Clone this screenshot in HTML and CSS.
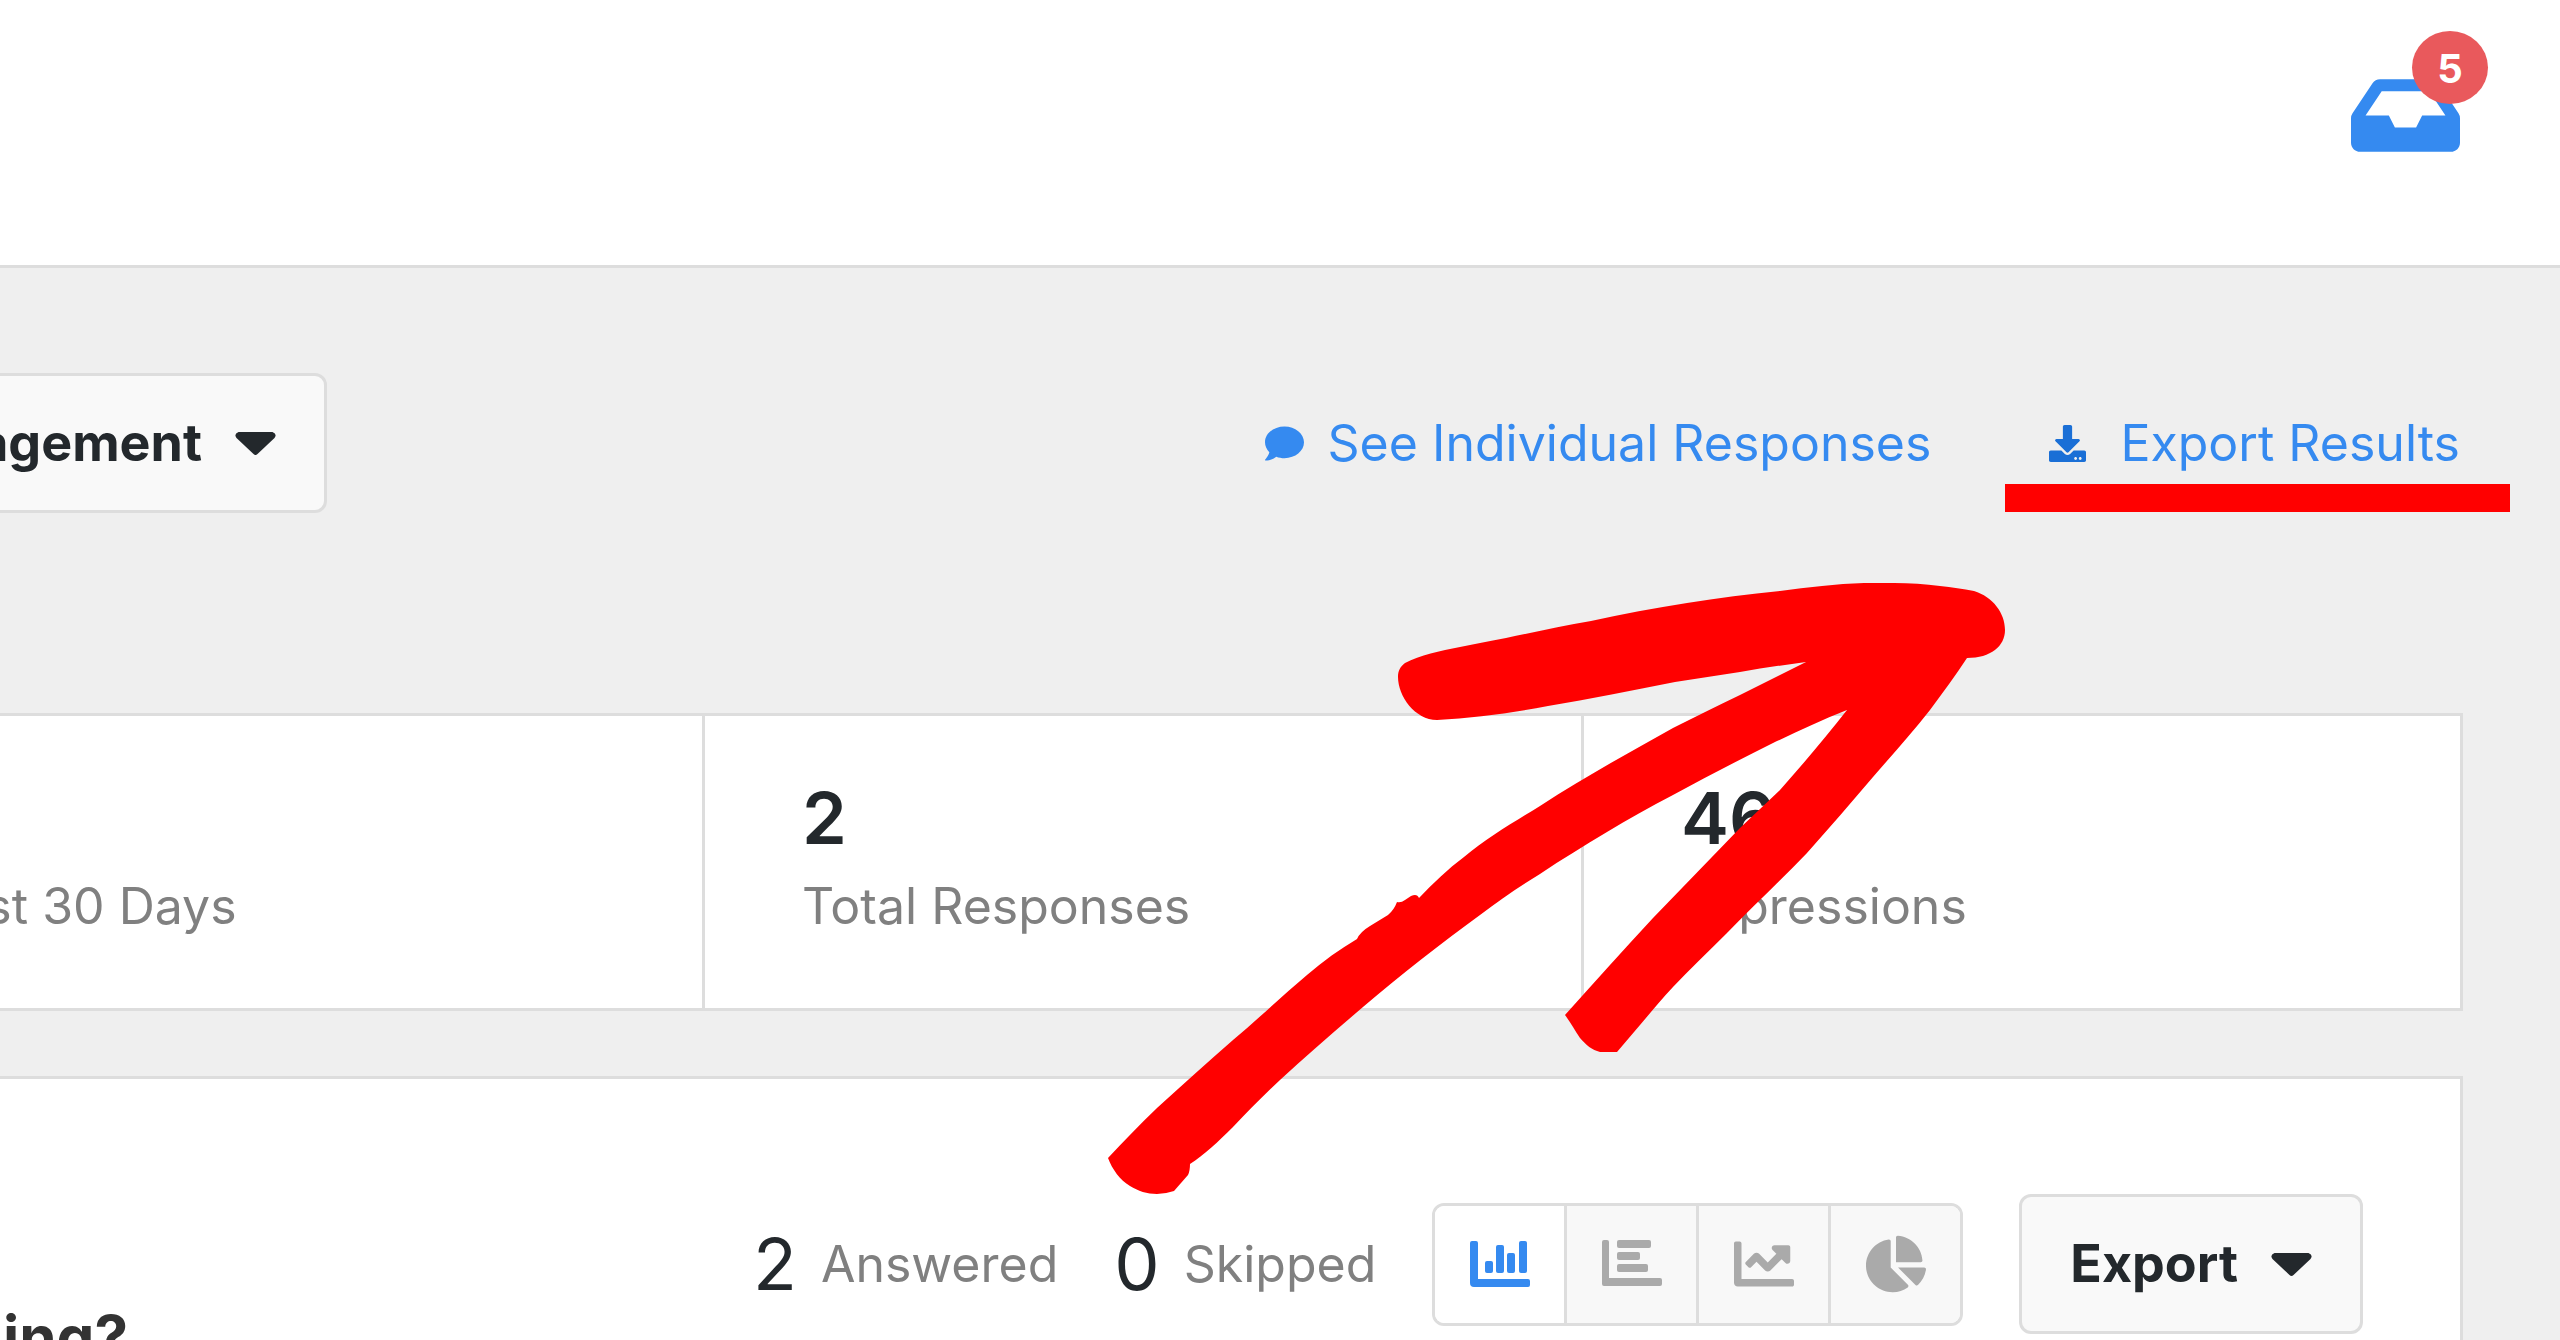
FILE: index.html
```html
<!DOCTYPE html>
<html lang="en">
<head>
    <meta charset="UTF-8">
    <meta name="viewport" content="width=device-width, initial-scale=1.0">
    <title>Survey Report</title>
    <link rel="stylesheet" href="styles.css">
</head>
<body>
    <header class="topbar">
        <button class="inbox-button" aria-label="Notifications">
            <svg class="inbox-icon" viewBox="0 64 576 384"><path d="M567.938 243.908L462.25 85.374A48.003 48.003 0 0 0 422.311 64H153.689a48 48 0 0 0-39.938 21.374L8.062 243.908A47.994 47.994 0 0 0 0 270.533V400c0 26.51 21.49 48 48 48h480c26.51 0 48-21.49 48-48V270.533a47.994 47.994 0 0 0-8.062-26.625zM162.252 128h251.497l85.333 128H376l-32 64H232l-32-64H76.918l85.334-128z"/></svg>
            <span class="badge">5</span>
        </button>
    </header>

    <main class="report">
        <div class="toolbar">
            <button class="button survey-picker">
                Engagement
                <svg class="caret" viewBox="0 0 40 23"><path d="M3 0h34q5 2 2 6L22 22q-2 2-4 0L1 6q-3-4 2-6z"/></svg>
            </button>
            <nav class="actions">
                <a href="#" class="action">
                    <svg class="comment-icon" viewBox="0 0 512 512"><path d="M256 32C114.6 32 0 125.1 0 240c0 49.6 21.4 95 57 130.7C44.5 421.1 2.7 466 2.2 466.5c-2.2 2.3-2.8 5.7-1.5 8.7S4.8 480 8 480c66.3 0 116-31.8 140.6-51.4 32.7 12.3 69 19.4 107.4 19.4 141.4 0 256-93.1 256-208S397.4 32 256 32z"/></svg>
                    See Individual Responses
                </a>
                <a href="#" class="action action-export">
                    <svg class="download-icon" viewBox="0 0 512 512"><path d="M216 0h80c13.3 0 24 10.7 24 24v168h87.7c17.8 0 26.7 21.5 14.1 34.1L269.7 378.3c-7.5 7.5-19.8 7.5-27.3 0L90.1 226.1c-12.6-12.6-3.7-34.1 14.1-34.1H192V24c0-13.3 10.7-24 24-24zm296 376v112c0 13.3-10.7 24-24 24H24c-13.3 0-24-10.7-24-24V376c0-13.3 10.7-24 24-24h146.7l49 49c20.1 20.1 52.5 20.1 72.6 0l49-49H488c13.3 0 24 10.7 24 24zm-124 88c0-11-9-20-20-20s-20 9-20 20 9 20 20 20 20-9 20-20zm64 0c0-11-9-20-20-20s-20 9-20 20 9 20 20 20 20-9 20-20z"/></svg>
                    Export Results
                </a>
            </nav>
        </div>

        <section class="stats">
            <div class="stat">
                <strong class="stat-value">&nbsp;</strong>
                <span class="stat-label">Last 30 Days</span>
            </div>
            <div class="stat">
                <strong class="stat-value">2</strong>
                <span class="stat-label">Total Responses</span>
            </div>
            <div class="stat">
                <strong class="stat-value">46</strong>
                <span class="stat-label">Impressions</span>
            </div>
        </section>

        <section class="question">
            <h2 class="question-title">ing?</h2>
            <div class="question-tools">
                <div class="counts">
                    <span class="count"><b>2</b> Answered</span>
                    <span class="count"><b>0</b> Skipped</span>
                </div>
                <div class="chart-types">
                    <button class="chart-type active" aria-label="Column chart">
                        <svg viewBox="0 0 60 60"><path d="M2 7h4q2 0 2 2v36h50q2 0 2 2v4q0 2-2 2H4q-4 0-4-4V9q0-2 2-2z"/><rect x="15" y="27" width="8" height="12" rx="2"/><rect x="26" y="11" width="8" height="28" rx="2"/><rect x="37" y="19" width="8" height="20" rx="2"/><rect x="49" y="7" width="8" height="32" rx="2"/></svg>
                    </button>
                    <button class="chart-type" aria-label="Bar chart">
                        <svg viewBox="0 0 60 60"><path d="M2 6h3q2 0 2 2v36h51q2 0 2 2v4q0 2-2 2H2q-2 0-2-2V8q0-2 2-2z"/><rect x="15" y="6" width="34" height="8" rx="2"/><rect x="15" y="18" width="23" height="8" rx="2"/><rect x="15" y="30" width="31" height="8" rx="2"/></svg>
                    </button>
                    <button class="chart-type" aria-label="Line chart">
                        <svg viewBox="0 0 512 512"><path d="M496 384H64V80c0-8.84-7.16-16-16-16H16C7.16 64 0 71.16 0 80v336c0 17.67 14.33 32 32 32h464c8.84 0 16-7.16 16-16v-32c0-8.84-7.16-16-16-16zM464 96H345.94c-21.38 0-32.09 25.85-16.97 40.97l32.4 32.4L288 242.75l-73.37-73.37c-12.5-12.5-32.76-12.5-45.25 0l-68.69 68.69c-6.25 6.25-6.25 16.38 0 22.63l22.62 22.62c6.25 6.25 16.38 6.25 22.63 0L192 237.25l73.37 73.37c12.5 12.5 32.76 12.5 45.25 0l96-96 32.4 32.4c15.12 15.12 40.97 4.41 40.97-16.97V112c.01-8.84-7.15-16-15.99-16z"/></svg>
                    </button>
                    <button class="chart-type" aria-label="Pie chart">
                        <svg viewBox="0 0 544 512"><path d="M527.79 288H290.5l158.03 158.03c6.04 6.04 15.98 6.53 22.19.68 38.7-36.46 65.32-85.61 73.13-140.86 1.34-9.46-6.51-17.85-16.06-17.85zm-15.83-64.8C503.72 103.74 408.26 8.28 288.8.04 279.68-.59 272 7.1 272 16.24V240h223.77c9.14 0 16.82-7.68 16.19-16.8zM224 288V50.71c0-9.55-8.39-17.4-17.84-16.06C86.99 51.49-4.1 155.6.14 280.37 4.5 408.51 114.83 513.59 243.03 511.98c50.4-.63 96.97-16.87 135.26-44.03 7.9-5.6 8.42-17.23 1.57-24.08L224 288z"/></svg>
                    </button>
                </div>
                <button class="button">
                    Export
                    <svg class="caret" viewBox="0 0 40 23"><path d="M3 0h34q5 2 2 6L22 22q-2 2-4 0L1 6q-3-4 2-6z"/></svg>
                </button>
            </div>
        </section>

        <!-- Arrow pointing at the export link -->
        <svg class="arrow" viewBox="1108 583 897 611"><path d="M1398 677C1398 671 1400 667 1405 663C1420 655 1440 651 1460 647C1475 644 1490 641 1506 638C1535 632 1562 626 1591 621C1622 614 1655 608 1687 603C1718 598 1749 594 1780 591C1808 587 1836 584 1864 583H1894C1910 583 1925 584 1940 586C1952 587 1963 589 1974 591C1993 597 2005 613 2005 630C2005 646 1991 658 1967 658C1956 675 1943 692 1930 710C1912 733 1892 755 1873 777C1851 803 1829 828 1807 853C1781 880 1753 906 1727 933C1709 951 1690 969 1673 987C1661 1000 1651 1012 1640 1025L1617 1052H1600C1592 1050 1586 1045 1580 1038C1575 1031 1571 1023 1565 1015C1594 983 1623 950 1653 918L1740 828L1780 790C1803 764 1826 737 1847 710C1821 720 1797 732 1773 743C1739 760 1706 777 1673 795C1650 807 1628 819 1607 832C1584 846 1562 859 1540 874C1520 886 1500 900 1480 915C1440 944 1402 974 1363 1007C1335 1031 1307 1055 1280 1080C1264 1095 1248 1111 1233 1127C1218 1142 1204 1155 1190 1164Q1190 1171 1188 1175L1174 1191Q1165 1194 1157 1194C1147 1194 1138 1191 1130 1186C1120 1180 1112 1169 1108 1158C1124 1141 1140 1124 1157 1108C1182 1085 1207 1063 1233 1040C1258 1019 1282 996 1307 975C1323 961 1340 949 1357 939Q1360 932 1370 926L1388 915Q1394 910 1397 902Q1401 903 1405 900L1411 896Q1417 893 1419 898C1433 883 1448 869 1464 857C1488 837 1514 822 1540 806C1583 778 1628 753 1673 728C1695 717 1717 706 1740 695L1806 662C1784 665 1762 668 1740 672L1675 682C1633 690 1590 699 1548 706C1511 713 1474 718 1437 720C1415 720 1398 696 1398 677Z"/></svg>
    </main>
</body>
</html>
```

FILE: styles.css
```css
* {
    box-sizing: border-box;
}

body {
    margin: 0;
    height: 100vh;
    background-color: #efefef;
    overflow: hidden;
    color: #23282c;
    font-family: Inter, 'Liberation Sans', sans-serif;
    font-size: 50px;
    line-height: 64px;
}

button {
    font: inherit;
    color: inherit;
    cursor: pointer;
}

svg {
    display: block;
    fill: currentColor;
    flex-shrink: 0;
}

/* Top bar */
.topbar {
    display: flex;
    justify-content: flex-end;
    align-items: flex-start;
    height: 268px;
    padding: 79px 100px 0;
    background-color: #fff;
    border-bottom: 3px solid #ddd;
}

.inbox-button {
    position: relative;
    padding: 0;
    border: none;
    background: none;
    color: #358af0;
}

.inbox-icon {
    width: 109px;
    height: 73px;
}

.badge {
    position: absolute;
    top: -48px;
    right: -28px;
    width: 76px;
    height: 73px;
    border-radius: 50%;
    background-color: #e9595c;
    color: #fff;
    font-size: 40px;
    font-weight: 700;
    line-height: 75px;
    text-align: center;
}

/* The report starts left of the window */
.report {
    position: relative;
    margin-left: -180px;
    padding: 105px 97px 0 0;
}

.toolbar {
    display: flex;
    justify-content: space-between;
    align-items: center;
    margin-bottom: 200px;
    padding-right: 3px;
}

.button {
    display: flex;
    align-items: center;
    gap: 33px;
    height: 140px;
    padding: 0 48px;
    border: 3px solid #ddd;
    border-radius: 12px;
    background-color: #f9f9f9;
    font-size: 52px;
    font-weight: 700;
}

.survey-picker {
    justify-content: flex-end;
    width: 507px;
}

.caret {
    width: 41px;
    height: 23px;
}

.actions {
    display: flex;
    gap: 118px;
}

.action {
    position: relative;
    display: flex;
    align-items: center;
    gap: 24px;
    color: #358af0;
    text-decoration: none;
}

.action-export {
    gap: 34px;
}

.comment-icon {
    width: 39px;
    height: 39px;
}

.download-icon {
    width: 37px;
    height: 37px;
    color: #1a6fd6;
}

/* Red underline */
.action-export::after {
    content: "";
    position: absolute;
    top: 73px;
    left: -44px;
    right: -50px;
    height: 28px;
    background-color: #f00;
}

/* Stats */
.stats {
    display: grid;
    grid-template-columns: repeat(3, 1fr);
    margin-bottom: 65px;
    background-color: #fff;
    border: 3px solid #ddd;
}

.stat {
    display: flex;
    flex-direction: column;
    gap: 12px;
    padding: 58px 0 70px 97px;
}

.stat:first-child {
    padding-left: 106px;
}

.stat + .stat {
    border-left: 3px solid #ddd;
}

.stat-value {
    font-size: 72px;
    font-weight: 600;
    line-height: 88px;
}

.stat-label {
    color: #808080;
}

/* Question */
.question {
    display: flex;
    justify-content: space-between;
    align-items: flex-start;
    padding: 115px 97px 100px 180px;
    background-color: #fff;
    border: 3px solid #ddd;
}

.question-title {
    margin: 107px 0 0;
    color: #333;
    font-size: 60px;
    font-weight: 700;
    line-height: 72px;
}

.question-tools {
    display: flex;
    align-items: center;
}

.counts {
    display: flex;
    gap: 56px;
    margin-right: 56px;
}

.count {
    display: flex;
    align-items: center;
    gap: 24px;
    color: #808080;
}

.count b {
    color: #23282c;
    font-size: 72px;
    font-weight: 400;
}

.chart-types {
    display: flex;
    margin-right: 56px;
    border: 3px solid #ddd;
    border-radius: 12px;
    overflow: hidden;
}

.chart-type {
    display: flex;
    justify-content: center;
    align-items: center;
    width: 132px;
    height: 117px;
    padding: 0;
    border: none;
    background-color: #f8f8f8;
    color: #aaa;
}

.chart-type + .chart-type {
    border-left: 3px solid #ddd;
}

.chart-type.active {
    width: 129px;
    background-color: #fff;
    color: #358af0;
}

.chart-type svg {
    width: 60px;
    height: 60px;
}

/* Arrow */
.arrow {
    position: absolute;
    top: 315px;
    right: 555px;
    width: 897px;
    height: 611px;
    fill: #f00;
}
```
